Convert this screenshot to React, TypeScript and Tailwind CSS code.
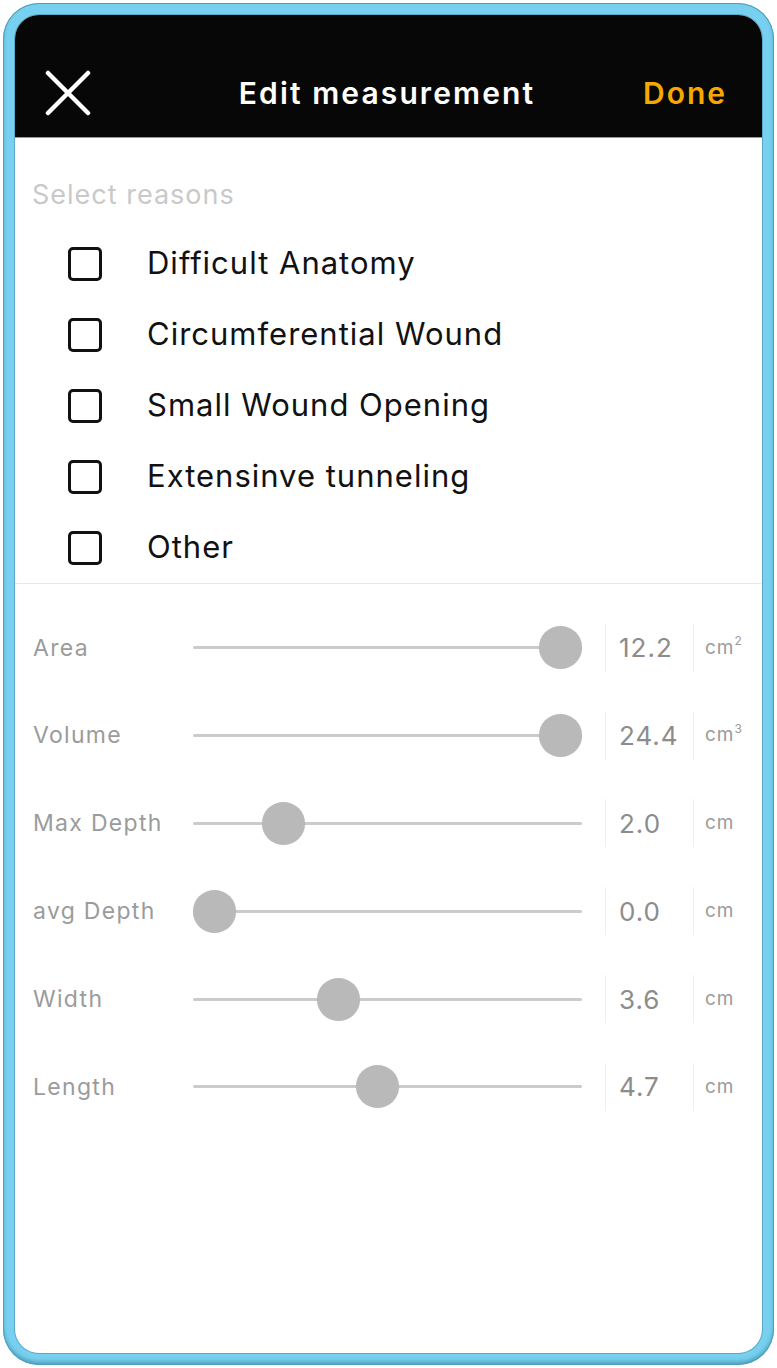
import React from "react";

const reasons = [
  "Difficult Anatomy",
  "Circumferential Wound",
  "Small Wound Opening",
  "Extensinve tunneling",
  "Other",
];

const measures = [
  { label: "Area", value: "12.2", unit: "cm", sup: "2", pos: 1 },
  { label: "Volume", value: "24.4", unit: "cm", sup: "3", pos: 1 },
  { label: "Max Depth", value: "2.0", unit: "cm", sup: "", pos: 0.198 },
  { label: "avg Depth", value: "0.0", unit: "cm", sup: "", pos: 0 },
  { label: "Width", value: "3.6", unit: "cm", sup: "", pos: 0.357 },
  { label: "Length", value: "4.7", unit: "cm", sup: "", pos: 0.47 },
];

function Slider({ pos }: { pos: number }) {
  return (
    <div className="relative w-[389px] h-[44px] flex items-center">
      <div className="w-full h-[3px] bg-[#cbcbcb] rounded-full" />
      <div
        className="absolute top-[0.5px] w-[43px] h-[43px] rounded-full bg-[#b9b9b9] shadow-[0_0_1px_rgba(0,0,0,0.15)]"
        style={{ left: `${pos * 346}px` }}
      />
    </div>
  );
}

export default function App() {
  return (
    <div
      className="w-[777px] h-[1368px] bg-white p-[3px]"
      style={{ fontFamily: "Inter, 'Noto Sans', sans-serif" }}
    >
      <div className="w-[771px] h-[1362px] rounded-[36px] bg-[#77d0ef] p-[12px] shadow-[inset_0_0_0_1px_#4f9fbf,inset_0_-3px_4px_rgba(0,60,90,0.35)]">
        <div className="w-full h-full rounded-[24px] bg-white overflow-hidden flex flex-col shadow-[0_0_0_1px_#5aa9c8]">

          <div className="h-[123px] bg-[#070707] border-b border-[#9a9a9a] pt-[34px] shrink-0">
            <div className="h-[88px] grid grid-cols-[1fr_auto_1fr] items-center pl-[30px] pr-[35px]">
              <svg width="46" height="46" viewBox="0 0 46 46">
                <path
                  d="M3 3 L43 43 M43 3 L3 43"
                  stroke="#ffffff"
                  strokeWidth="4.5"
                  strokeLinecap="round"
                />
              </svg>
              <div className="text-white text-[30px] font-semibold tracking-[2.1px] ml-[2px]">
                Edit measurement
              </div>
              <div className="text-[#f7a800] text-[30px] font-semibold tracking-[2px] text-right">
                Done
              </div>
            </div>
          </div>

          <div className="pl-[17px] pt-[41px] text-[27px] leading-[32px] text-[#c9c9c9] tracking-[1px]">
            Select reasons
          </div>

          <div className="mt-[17px] border-b border-[#e6e6e6]">
            {reasons.map((r) => (
              <div key={r} className="h-[71px] flex items-center pl-[53px]">
                <div className="w-[34px] h-[34px] border-[3px] border-[#111] rounded-[5px]" />
                <div className="ml-[45px] text-[31px] text-[#111] tracking-[1px]">
                  {r}
                </div>
              </div>
            ))}
          </div>

          <div className="pt-[20px]">
            {measures.map((m) => (
              <div key={m.label} className="h-[87.8px] flex items-center">
                <div className="w-[178px] pl-[18px] text-[23px] text-[#9b9b9b] tracking-[1.3px]">
                  {m.label}
                </div>
                <Slider pos={m.pos} />
                <div className="ml-[23px] w-[88px] h-[48px] border-l border-[#f0f0f0] flex items-center pl-[13px] text-[26px] text-[#8c8c8c] tracking-[1px]">
                  {m.value}
                </div>
                <div className="h-[48px] border-l border-[#f0f0f0] flex items-center pl-[11px] text-[19px] text-[#9b9b9b] tracking-[1px]">
                  {m.unit}
                  {m.sup && (
                    <span className="text-[12px] relative -top-[7px]">
                      {m.sup}
                    </span>
                  )}
                </div>
              </div>
            ))}
          </div>

        </div>
      </div>
    </div>
  );
}
